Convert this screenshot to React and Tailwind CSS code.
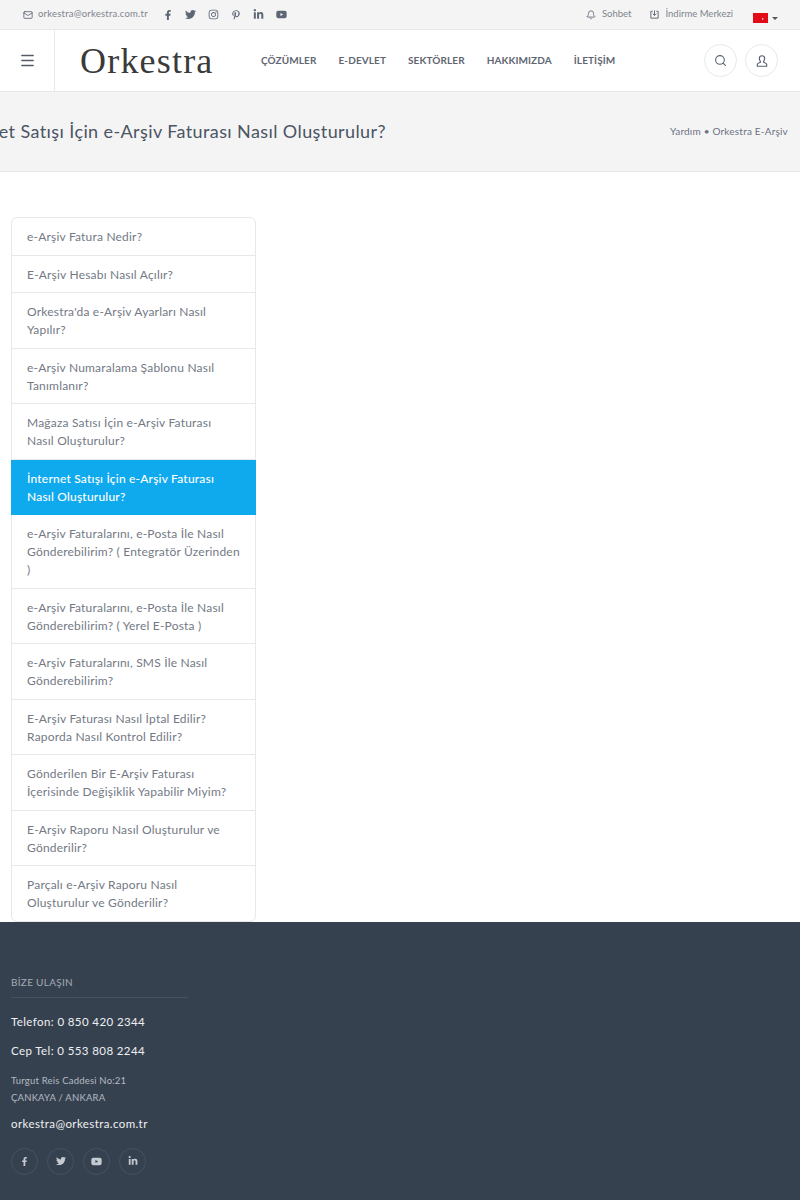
import { Bell, Menu, Search, Mail } from "lucide-react";
import { FaFacebookF, FaTwitter, FaInstagram, FaPinterestP, FaLinkedinIn, FaYoutube } from "react-icons/fa";

const items = [
  "e-Arşiv Fatura Nedir?",
  "E-Arşiv Hesabı Nasıl Açılır?",
  "Orkestra'da e-Arşiv Ayarları Nasıl Yapılır?",
  "e-Arşiv Numaralama Şablonu Nasıl Tanımlanır?",
  "Mağaza Satısı İçin e-Arşiv Faturası Nasıl Oluşturulur?",
  "İnternet Satışı İçin e-Arşiv Faturası Nasıl Oluşturulur?",
  "e-Arşiv Faturalarını, e-Posta İle Nasıl Gönderebilirim? ( Entegratör Üzerinden )",
  "e-Arşiv Faturalarını, e-Posta İle Nasıl Gönderebilirim? ( Yerel E-Posta )",
  "e-Arşiv Faturalarını, SMS İle Nasıl Gönderebilirim?",
  "E-Arşiv Faturası Nasıl İptal Edilir? Raporda Nasıl Kontrol Edilir?",
  "Gönderilen Bir E-Arşiv Faturası İçerisinde Değişiklik Yapabilir Miyim?",
  "E-Arşiv Raporu Nasıl Oluşturulur ve Gönderilir?",
  "Parçalı e-Arşiv Raporu Nasıl Oluşturulur ve Gönderilir?",
];

const nav = ["ÇÖZÜMLER", "E-DEVLET", "SEKTÖRLER", "HAKKIMIZDA", "İLETİŞİM"];

export default function App() {
  return (
    <div className="min-h-[1200px] flex flex-col bg-white font-['Lato','Noto_Sans',sans-serif] text-[#6b7280] overflow-hidden">
      {/* top bar */}
      <div className="h-[29px] bg-[#f4f4f5] flex items-center pl-[23px] pr-[22px] text-[#7f858e]">
        <Mail size={10} className="text-[#5a6270]" />
        <span className="ml-[5px] text-[9.5px] tracking-[0.2px]">orkestra@orkestra.com.tr</span>
        <div className="flex items-center gap-[12px] ml-[15px] text-[#5d6675]">
          <FaFacebookF size={10} />
          <FaTwitter size={11} />
          <FaInstagram size={11} />
          <FaPinterestP size={10} />
          <FaLinkedinIn size={11} />
          <FaYoutube size={11} />
        </div>
        <div className="ml-auto flex items-center">
          <Bell size={10} className="text-[#5a6270]" />
          <span className="ml-[6px] text-[9.5px]">Sohbet</span>
          <svg width="11" height="11" viewBox="0 0 24 24" fill="none" stroke="#5a6270" strokeWidth="2" className="ml-[18px]">
            <path d="M8 5H4v15h16V5h-4M12 3v11M8 10l4 4 4-4" />
          </svg>
          <span className="ml-[5px] text-[9.5px]">İndirme Merkezi</span>
          <div className="ml-[20px] mt-[7px] w-[15px] h-[10px] bg-[#e30a17] flex items-center justify-center">
            <svg width="9" height="7" viewBox="0 0 18 14" fill="#fff">
              <path d="M7 1a6 6 0 1 0 0 12 5 5 0 1 1 0-12z" />
              <path d="M12 7l3-1.500-1 2.500 1 2-3-1.500z" />
            </svg>
          </div>
          <div className="ml-[4px] mt-[7px] border-x-[3px] border-x-transparent border-t-[3px] border-t-[#555]"></div>
        </div>
      </div>

      {/* header */}
      <div className="h-[63px] bg-white border-y border-[#e7e8ea] flex items-center">
        <div className="w-[55px] h-full border-r border-[#e7e8ea] flex items-center justify-center">
          <Menu size={17} className="text-[#555c68]" />
        </div>
        <div className="w-[206px] pl-[25px] font-['Liberation_Serif',serif] text-[36px] leading-none tracking-[1.2px] text-[#3a3a3a]">
          Orkestra
        </div>
        <nav className="flex gap-[22px] text-[10px] font-bold text-[#5f6672] tracking-[0.1px]">
          {nav.map((n) => (
            <span key={n}>{n}</span>
          ))}
        </nav>
        <div className="ml-auto mr-[22px] flex gap-[8px]">
          <div className="w-[33px] h-[33px] rounded-full border border-[#e7e8ea] flex items-center justify-center">
            <Search size={13} className="text-[#5a6270]" />
          </div>
          <div className="w-[33px] h-[33px] rounded-full border border-[#e7e8ea] flex items-center justify-center">
            <svg width="14" height="14" viewBox="0 0 24 24" fill="none" stroke="#5a6270" strokeWidth="2">
              <path d="M12 3a4.5 4.5 0 0 0-4.5 4.5c0 3 1.5 4.5 2 6 0 1.5-5.5 1.500-5.500 4V21h16v-3.500c0-2.500-5.500-2.500-5.500-4 .5-1.500 2-3 2-6A4.500 4.500 0 0 0 12 3z" />
            </svg>
          </div>
        </div>
      </div>

      {/* page title */}
      <div className="h-[80px] bg-[#f4f4f5] border-b border-[#e7e8ea] flex items-center justify-between pr-[12px]">
        <h1 className="ml-[-51px] shrink-0 text-[18px] tracking-[0.4px] text-[#4b5563] whitespace-nowrap">
          İnternet Satışı İçin e-Arşiv Faturası Nasıl Oluşturulur?
        </h1>
        <div className="text-[10px] tracking-[0.2px] text-[#6b7280] whitespace-nowrap">Yardım • Orkestra E-Arşiv</div>
      </div>

      {/* list */}
      <div className="pt-[45px] pl-[11px]">
        <ul className="w-[245px] border border-[#e7e8ea] rounded-[6px] text-[12px] leading-[18px] tracking-[0.2px] text-[#737985]">
          {items.map((t) => (
            <li
              key={t}
              className={
                t.startsWith("İnternet")
                  ? "bg-[#0fa9ee] text-white font-medium px-[16px] pt-[10.75px] pb-[8.75px] -mx-px"
                  : "px-[15px] pt-[10.25px] pb-[8.25px] border-b border-[#e7e8ea] last:border-b-0"
              }
            >
              {t}
            </li>
          ))}
        </ul>
      </div>

      {/* footer */}
      <div className="flex-1 bg-[#36414f] pl-[11px] pt-[53px]">
        <div className="w-[177px] border-b border-[#475260] pb-[7px] text-[10px] text-[#a3abb5] tracking-[0.3px]">BİZE ULAŞIN</div>
        <div className="mt-[16px] text-[11.5px] leading-[16px] text-[#eef0f2] tracking-[0.4px]">Telefon: 0 850 420 2344</div>
        <div className="mt-[13px] text-[11.5px] leading-[16px] text-[#eef0f2] tracking-[0.4px]">Cep Tel: 0 553 808 2244</div>
        <div className="mt-[13px] text-[9.5px] leading-[17px] text-[#b3bac3] tracking-[0.2px]">
          Turgut Reis Caddesi No:21
          <br />
          ÇANKAYA / ANKARA
        </div>
        <div className="mt-[10px] text-[11.5px] leading-[16px] text-[#eef0f2] tracking-[0.4px]">orkestra@orkestra.com.tr</div>
        <div className="mt-[16px] flex gap-[9px] text-[#c5cad1]">
          {[<FaFacebookF size={9} />, <FaTwitter size={10} />, <FaYoutube size={11} />, <FaLinkedinIn size={10} />].map((icon, i) => (
            <div key={i} className="w-[27px] h-[27px] rounded-full border border-[#475260] flex items-center justify-center">
              {icon}
            </div>
          ))}
        </div>
      </div>
    </div>
  );
}
